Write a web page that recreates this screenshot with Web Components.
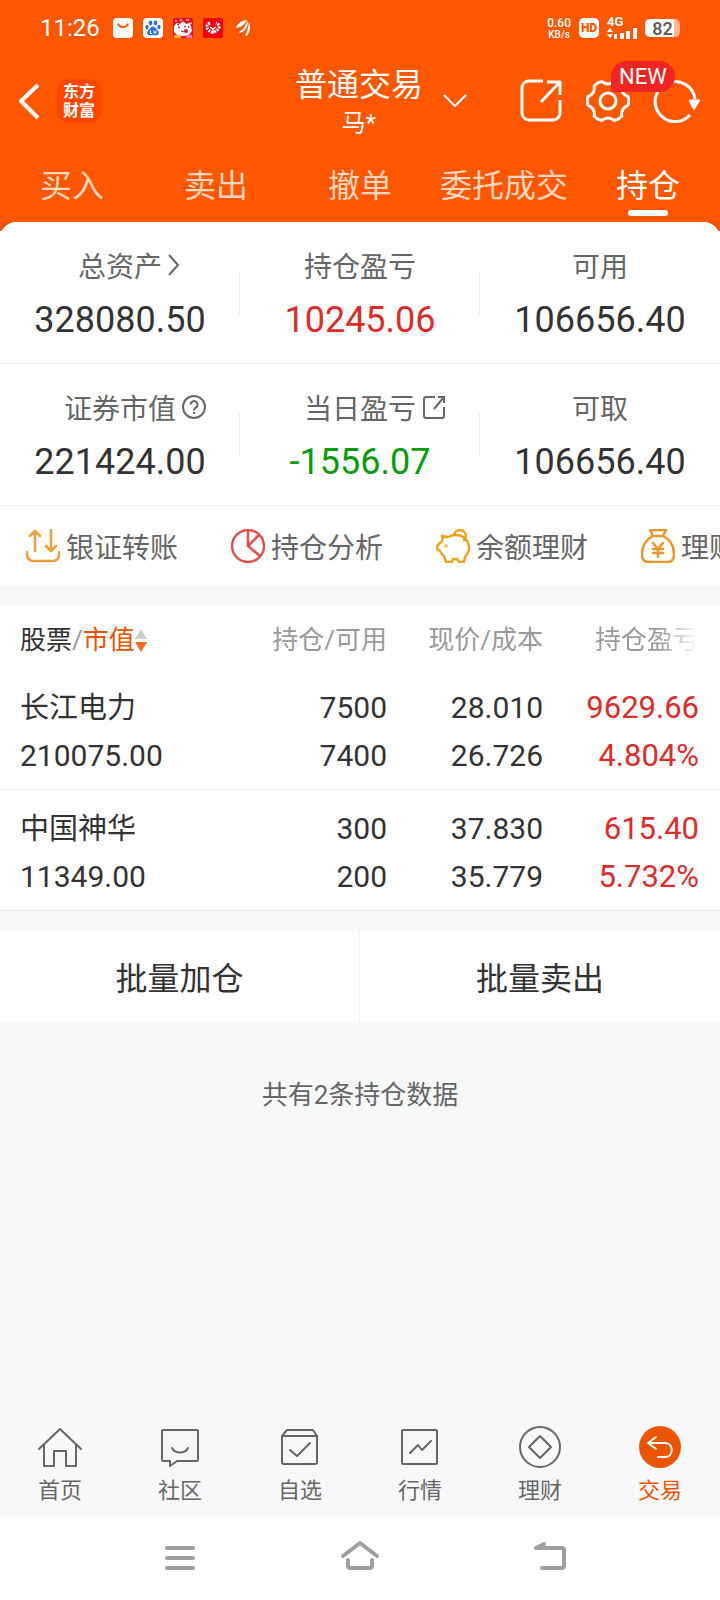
<!DOCTYPE html>
<html lang="zh-CN">
<head>
<meta charset="UTF-8">
<meta name="viewport" content="width=device-width, initial-scale=1.0">
<title>普通交易</title>
<style>
    html {
        --primary: #ff5700;
        --primary-dark: #ea5504;
        --text: #333333;
        --text-secondary: #666666;
        --text-light: #999999;
        --up: #dd2c2c;
        --down: #0a9a0a;
        --line: #ececec;
        --page: #f7f8fa;
        --cjk: Roboto, "Noto Sans CJK SC", sans-serif;
    }

    body {
        margin: 0;
        min-height: 100vh;
        display: flex;
        flex-direction: column;
        background: var(--page);
        color: var(--text);
        font-family: var(--cjk);
        overflow-x: hidden;
    }

    bottom-nav {
        margin-top: auto;
    }
</style>
</head>
<body>
<status-bar></status-bar>
<trade-header account="普通交易" user="马*"></trade-header>
<trade-tabs tabs="买入,卖出,撤单,委托成交,持仓" active="持仓"></trade-tabs>

<asset-board>
    <asset-item value="328080.50">总资产
        <svg slot="icon" width="12" height="22" viewBox="0 0 12 22" fill="none" stroke="#666" stroke-width="2"><path d="M1 1l9 10-9 10"/></svg>
    </asset-item>
    <asset-item value="10245.06" trend="up">持仓盈亏</asset-item>
    <asset-item value="106656.40">可用</asset-item>
    <asset-item value="221424.00">证券市值
        <svg slot="icon" width="24" height="24" viewBox="0 0 24 24" fill="none" stroke="#666" stroke-width="2"><circle cx="12" cy="12" r="11"/><path d="M8.500 9.500a3.500 3.500 0 1 1 5.500 2.900c-1.400.9-2 1.500-2 3M12 17v2"/></svg>
    </asset-item>
    <asset-item value="-1556.07" trend="down">当日盈亏
        <svg slot="icon" width="24" height="24" viewBox="0 0 24 24" fill="none" stroke="#666" stroke-width="2"><path d="M13 2H4a2 2 0 0 0-2 2v17a2 2 0 0 0 2 2h16a2 2 0 0 0 2-2v-9M16 2h6v6M22 2L12 14"/></svg>
    </asset-item>
    <asset-item value="106656.40">可取</asset-item>
</asset-board>

<quick-actions></quick-actions>
<position-table></position-table>
<batch-actions>共有2条持仓数据</batch-actions>
<bottom-nav></bottom-nav>
<system-nav></system-nav>

<script>
// 所有组件共用的基类：把模板克隆进 shadow root
class BaseElement extends HTMLElement {
    constructor() {
        super();
        this.attachShadow({mode: 'open'});
    }

    connectedCallback() {
        const template = document.createElement('template');
        template.innerHTML = this.render();
        this.shadowRoot.replaceChildren(template.content.cloneNode(true));
        this.setupEventListeners();
    }

    setupEventListeners() {
    }
}

// 手机状态栏
class StatusBar extends BaseElement {
    render() {
        return `
            <style>
                :host {
                    display: flex;
                    align-items: center;
                    justify-content: space-between;
                    height: 56px;
                    padding: 0 40px;
                    background: var(--primary);
                    color: #fff;
                }
                .group { display: flex; align-items: center; gap: 10px; }
                .right { gap: 8px; }
                .time { font-size: 24px; line-height: 32px; margin-right: 3px; }
                .speed { display: flex; flex-direction: column; align-items: center; font-size: 12px; line-height: 12px; font-weight: 500; }
                .speed small { font-size: 10px; line-height: 11px; }
                .hd {
                    width: 20px; height: 20px; border-radius: 5px; background: #fff;
                    color: var(--primary); font-size: 12px; line-height: 20px; font-weight: 900; text-align: center;
                }
                .signal { display: flex; flex-direction: column; font-size: 13px; line-height: 10px; font-weight: 700; }
                .battery {
                    width: 35px; height: 18px; border-radius: 5px;
                    background: linear-gradient(90deg, #fff 82%, #ffb58f 82%);
                    color: #555; font-size: 18px; line-height: 19px; font-weight: 500; text-align: center;
                }
                svg { display: block; }
            </style>
            <div class="group">
                <span class="time">11:26</span>
                <svg width="20" height="20" viewBox="0 0 20 20"><rect width="20" height="20" rx="4" fill="#fff"/><path d="M5 5.500c1 4.500 9 4.500 10 0" fill="none" stroke="#ff5700" stroke-width="2"/></svg>
                <svg width="20" height="20" viewBox="0 0 20 20"><rect width="20" height="20" rx="4" fill="#fff"/><g fill="#2d72d9"><ellipse cx="7.500" cy="5" rx="1.800" ry="2.400"/><ellipse cx="12.500" cy="5" rx="1.800" ry="2.400"/><ellipse cx="4" cy="9" rx="1.700" ry="2.200"/><ellipse cx="16" cy="9" rx="1.700" ry="2.200"/><path d="M10 8.500c2 0 3 2 4.500 3.500 2.500 2.500 1 5.500-1.500 5.500-1 0-2-.5-3-.5s-2 .5-3 .5c-2.500 0-4-3-1.500-5.500C7 10.500 8 8.500 10 8.500z"/></g><path d="M7.500 12.500v3h1.500M11 12.500v2.500h2v-2.500" fill="none" stroke="#fff"/></svg>
                <svg width="20" height="20" viewBox="0 0 20 20"><rect width="20" height="20" rx="2" fill="#e3122d"/><path d="M1 8l3-3 3 1 3-3 3 3 4-1 1 4 1 4-3 4-5 1-6 0-4-4z" fill="#fff"/><path d="M2 3h2M7 2h2M13 2h3M17 5h2" stroke="#fff"/><path d="M5 9l2 1M11 9l2-1M8 13q3 2 5-1M4 6l2 1M15 8l1 2" stroke="#551a20" fill="none"/><circle cx="13" cy="13" r="2" fill="#e3122d"/><rect x="1" y="17" width="7" height="3" fill="#ffb52e"/><rect x="13" y="17" width="6" height="3" fill="#f06fae"/></svg>
                <svg width="20" height="20" viewBox="0 0 20 20"><rect width="20" height="20" rx="2" fill="#f0000f"/><path d="M7 5C2 7 3 12 10 14.500 17 12 18 7 13 5" fill="none" stroke="#fff" stroke-width="3" stroke-dasharray="2 1"/><path d="M7 9l3 2 3-2M10 10v5" fill="none" stroke="#fff" stroke-width="1.500"/></svg>
                <svg width="20" height="20" viewBox="0 0 20 20" fill="#fff"><path d="M3 9C6 4 10 2.500 14 2 12 6 9 9 4 10zM6 14c5-3 6-7 9-11 0 6-3 11-8 12zM12 17c3-4 3-8 4-13 2 5 1 10-2 14z"/></svg>
            </div>
            <div class="group right">
                <span class="speed">0.60<small>KB/s</small></span>
                <span class="hd">HD</span>
                <span class="signal">4G
                    <svg width="30" height="12" viewBox="0 0 30 12" fill="#fff"><path d="M0 5l3-4 3 4zM0 7h6l-3 4zM7 7h3v5H7zM13 6h4v6h-4zM19 4h4v8h-4zM26 1h4v11h-4z"/></svg>
                </span>
                <span class="battery">82</span>
            </div>
        `;
    }
}

// 顶部标题栏
class TradeHeader extends BaseElement {
    render() {
        return `
            <style>
                :host {
                    display: grid;
                    grid-template-columns: 1fr auto 1fr;
                    align-items: center;
                    height: 86px;
                    padding: 2px 19px 0 17px;
                    background: var(--primary);
                    color: #fff;
                }
                button { padding: 0; border: 0; background: none; color: inherit; font: inherit; cursor: pointer; }
                svg { display: block; fill: none; stroke: #fff; stroke-width: 3; stroke-linejoin: round; }
                .left { display: flex; align-items: center; gap: 16px; }
                .back svg { stroke-width: 4; }
                .logo {
                    width: 44px; height: 44px; border-radius: 12px; background: #ff4600;
                    display: flex; flex-direction: column; justify-content: center;
                    font-size: 16px; line-height: 19px; font-weight: 700; text-align: center;
                }
                .title { display: flex; flex-direction: column; padding-top: 4px; font-size: 32px; line-height: 40px; text-align: center; }
                .title small { font-size: 24px; line-height: 36px; }
                .right { display: flex; align-items: center; justify-content: space-between; padding-left: 20px; }
                .tools { display: flex; align-items: center; gap: 23px; }
                .gear { position: relative; }
                .badge {
                    position: absolute; left: 25px; top: -18px;
                    padding: 0 8px; border-radius: 16px 16px 16px 2px;
                    background: #f12424; font-size: 22px; line-height: 31px;
                }
            </style>
            <div class="left">
                <button class="back" aria-label="返回"><svg width="24" height="40" viewBox="0 0 24 40"><path d="M21 4L4 20l17 17"/></svg></button>
                <span class="logo"><span>东方</span><span>财富</span></span>
            </div>
            <div class="title">${this.getAttribute('account')}<small>${this.getAttribute('user')}</small></div>
            <div class="right">
                <button aria-label="切换账户"><svg width="24" height="14" viewBox="0 0 24 14" style="stroke-width:2"><path d="M1 1l11 11L23 1"/></svg></button>
                <div class="tools">
                    <button aria-label="分享"><svg width="44" height="44" viewBox="0 0 44 44"><path d="M24 2H10a7 7 0 0 0-7 7v25a7 7 0 0 0 7 7h24a7 7 0 0 0 7-7V21M28 3h13v13M40 4L22 23"/></svg></button>
                    <button class="gear" aria-label="设置"><svg width="44" height="44" viewBox="0 0 44 44"><circle cx="22" cy="22" r="8"/><path d="M42 17.700Q43.500 22 42 26.300 34.600 29.300 35.700 37.200 32.800 40.600 28.300 41.500 22 36.500 15.700 41.500 11.200 40.600 8.300 37.200 9.400 29.300 2 26.300.5 22 2 17.700 9.400 14.700 8.300 6.800 11.200 3.400 15.700 2.500 22 7.500 28.300 2.500 32.800 3.400 35.700 6.800 34.600 14.700 42 17.700z"/></svg><span class="badge">NEW</span></button>
                    <button aria-label="刷新"><svg width="48" height="44" viewBox="0 0 48 44"><path d="M37 36A20 20 0 1 1 42 20"/><path d="M36 21h11l-6 10z" fill="#fff" stroke-width="1"/></svg></button>
                </div>
            </div>
        `;
    }
}

// 交易标签页
class TradeTabs extends BaseElement {
    render() {
        const tabs = this.getAttribute('tabs').split(',');
        const active = this.getAttribute('active');
        return `
            <style>
                :host { display: block; background: var(--primary); }
                nav { display: grid; grid-template-columns: repeat(5, 1fr); padding-top: 18px; }
                button {
                    display: flex; flex-direction: column; align-items: center;
                    padding: 0 0 6px; border: 0; background: none; cursor: pointer;
                    color: #ffd5bf; font: inherit; font-size: 32px; line-height: 48px; white-space: nowrap;
                }
                button::after { content: ''; width: 40px; height: 6px; border-radius: 3px; }
                .active { color: #fff; }
                .active::after { background: #fff; }
            </style>
            <nav>${tabs.map(t => `<button class="${t === active ? 'active' : ''}">${t}</button>`).join('')}</nav>
        `;
    }

    setupEventListeners() {
        const buttons = this.shadowRoot.querySelectorAll('button');
        buttons.forEach(button => {
            button.addEventListener('click', () => {
                buttons.forEach(b => b.classList.remove('active'));
                button.classList.add('active');
            });
        });
    }
}

// 资产总览
class AssetBoard extends BaseElement {
    render() {
        return `
            <style>
                :host { display: block; background: linear-gradient(#e95408 9px, #fff 9px); }
                .grid {
                    display: grid; grid-template-columns: repeat(3, 1fr);
                    background: #fff; border-radius: 16px 16px 0 0; overflow: hidden;
                }
            </style>
            <div class="grid"><slot></slot></div>
        `;
    }
}

class AssetItem extends BaseElement {
    render() {
        return `
            <style>
                :host {
                    display: block;
                    padding: 26px 0 19px;
                    border-bottom: 1px solid var(--line);
                    background: linear-gradient(var(--line), var(--line)) right center / 1px 44px no-repeat;
                }
                :host(:nth-child(3n)) { background: none; }
                .label {
                    display: grid; grid-template-columns: 1fr auto 1fr; align-items: center; column-gap: 6px;
                    margin-bottom: 8px; color: var(--text-secondary); font-size: 28px; line-height: 40px;
                }
                .label span { grid-column: 2; }
                ::slotted(svg) { margin-bottom: 6px; }
                .value { font-size: 36px; line-height: 48px; text-align: center; }
                .up { color: var(--up); }
                .down { color: var(--down); }
            </style>
            <div class="label"><span><slot></slot></span><slot name="icon"></slot></div>
            <div class="value ${this.getAttribute('trend') || ''}">${this.getAttribute('value')}</div>
        `;
    }
}

// 快捷入口，超出屏幕的部分横向滚动
class QuickActions extends BaseElement {
    render() {
        return `
            <style>
                :host {
                    display: flex; gap: 53px; height: 79px; padding-left: 26px;
                    background: #fff; overflow: hidden;
                }
                a {
                    display: flex; align-items: center; gap: 6px; flex: none; padding-top: 6px;
                    color: var(--text-secondary); text-decoration: none; font-size: 28px; line-height: 40px;
                }
                svg { margin-bottom: 6px; fill: none; stroke-width: 2.500; stroke-linecap: round; stroke-linejoin: round; }
            </style>
            <a href="#"><svg width="34" height="34" viewBox="0 0 34 34" stroke="#e8a03c"><path d="M1 23v3a6 6 0 0 0 6 6h20a6 6 0 0 0 6-6v-3M9 22V2M4 7l5-5 5 5M25 1v21M20 17l5 5 5-5"/></svg>银证转账</a>
            <a href="#"><svg width="34" height="34" viewBox="0 0 34 34" stroke="#e34d4d"><circle cx="17" cy="17" r="16"/><path d="M17 1v16l11-11M17 17l12 10"/></svg>持仓分析</a>
            <a href="#"><svg width="34" height="34" viewBox="0 0 34 34" stroke="#eca41a"><path d="M6 7l6 1c2-1 5-2 8-2 8 0 13 6 13 13 0 4-2 7-4 9l-1 5h-5l-2-3h-4l-1 3H10l-2-6c-2-1-3-3-4-5l-3-2v-3l5-5c1-1 1-2 0-5zM18 6c1-7 12-6 12 1 0 2-1 3-2 4"/><circle cx="10" cy="17" r=".5"/></svg>余额理财</a>
            <a href="#"><svg width="34" height="34" viewBox="0 0 34 34" stroke="#e9962c"><path d="M9 1h16l-3 6H12zM12 7C4 11 1 17 1 25c0 6 2 8 6 8h20c4 0 6-2 6-8 0-8-3-14-11-18M12 14l5 6 5-6M17 20v8M12 20h10M12 24h10"/></svg>理财</a>
        `;
    }
}

// 持仓列表
class PositionTable extends BaseElement {
    get rows() {
        return [
            {name: '长江电力', worth: '210075.00', held: '7500', usable: '7400', price: '28.010', cost: '26.726', profit: '9629.66', rate: '4.804%'},
            {name: '中国神华', worth: '11349.00', held: '300', usable: '200', price: '37.830', cost: '35.779', profit: '615.40', rate: '5.732%'}
        ];
    }

    render() {
        return `
            <style>
                :host { display: block; margin: 20px 0; background: #fff; }
                table { width: 100%; border-collapse: collapse; table-layout: fixed; }
                th, td { box-sizing: border-box; padding: 0 0 0 20px; text-align: right; white-space: nowrap; }
                th:first-child, td:first-child { text-align: left; }
                th:last-child, td:last-child { padding-left: 0; padding-right: 21px; }
                .num { width: 156px; }
                .last { width: 177px; }
                th { height: 64px; padding-top: 6px; color: var(--text-light); font-size: 26px; line-height: 40px; font-weight: 400; }
                th b { color: var(--text); font-weight: 400; }
                th button { padding: 0; border: 0; background: none; font: inherit; color: var(--primary-dark); cursor: pointer; }
                th svg { vertical-align: -4px; }
                .fade { -webkit-mask-image: linear-gradient(90deg, #000 60%, transparent); mask-image: linear-gradient(90deg, #000 60%, transparent); }
                tbody tr { border-bottom: 1px solid var(--line); }
                td { padding-top: 15px; padding-bottom: 9px; font-size: 30px; line-height: 48px; }
                td:last-child { color: var(--up); font-size: 31px; }
                td div { height: 48px; }
                .name { font-size: 29px; }
            </style>
            <table>
                <thead>
                    <tr>
                        <th class="first"><b>股票</b>/<button>市值<svg width="12" height="24" viewBox="0 0 12 24"><path d="M6 0l6 10H0z" fill="#ccc"/><path d="M0 13h12L6 23z" fill="#f26a1b"/></svg></button></th>
                        <th class="num">持仓/可用</th>
                        <th class="num">现价/成本</th>
                        <th class="last"><span class="fade">持仓盈亏</span></th>
                    </tr>
                </thead>
                <tbody>
                    ${this.rows.map(r => `
                        <tr>
                            <td><div class="name">${r.name}</div><div>${r.worth}</div></td>
                            <td><div>${r.held}</div><div>${r.usable}</div></td>
                            <td><div>${r.price}</div><div>${r.cost}</div></td>
                            <td><div>${r.profit}</div><div>${r.rate}</div></td>
                        </tr>`).join('')}
                </tbody>
            </table>
        `;
    }
}

// 批量操作按钮和列表底部提示
class BatchActions extends BaseElement {
    render() {
        return `
            <style>
                :host { display: block; }
                .buttons { display: grid; grid-template-columns: 1fr 1fr; background: #fff; }
                button {
                    height: 92px; padding: 4px 0 0; border: 0; background: none; cursor: pointer;
                    color: var(--text); font: inherit; font-size: 32px; line-height: 48px;
                }
                button:first-child { border-right: 1px solid #f3f3f3; }
                p { margin: 52px 0 48px; color: var(--text-secondary); font-size: 26px; line-height: 40px; text-align: center; }
            </style>
            <div class="buttons"><button>批量加仓</button><button>批量卖出</button></div>
            <p><slot></slot></p>
        `;
    }
}

// 应用底部导航
class BottomNav extends BaseElement {
    render() {
        return `
            <style>
                :host { display: block; background: #f8f8fa; }
                nav { display: grid; grid-template-columns: repeat(6, 1fr); padding: 9px 0 11px; }
                a {
                    display: flex; flex-direction: column; align-items: center; gap: 8px;
                    color: var(--text-secondary); text-decoration: none; font-size: 22px; line-height: 28px;
                }
                .active { color: var(--primary-dark); }
                svg { fill: none; stroke: #666; stroke-width: 2; stroke-linejoin: round; stroke-linecap: round; }
                .active svg { stroke: #fff; }
            </style>
            <nav>
                <a href="#"><svg width="44" height="44" viewBox="0 0 44 44"><path d="M1 24L22 4l21 20M6 20v21h10V26h12v15h10V20"/></svg>首页</a>
                <a href="#"><svg width="44" height="44" viewBox="0 0 44 44"><path d="M5 5h34a1 1 0 0 1 1 1v29a1 1 0 0 1-1 1H19l-7 5v-5H5a1 1 0 0 1-1-1V6a1 1 0 0 1 1-1zM14 23c3 6 13 6 16 0"/></svg>社区</a>
                <a href="#"><svg width="44" height="44" viewBox="0 0 44 44"><path d="M4 11l5-6h26l4 6v26a2 2 0 0 1-2 2H6a2 2 0 0 1-2-2zM4 11h35M12 25l7 6 13-13"/></svg>自选</a>
                <a href="#"><svg width="44" height="44" viewBox="0 0 44 44"><rect x="4" y="5" width="35" height="34" rx="1"/><path d="M12 28l8-8 4 5 9-9"/></svg>行情</a>
                <a href="#"><svg width="44" height="44" viewBox="0 0 44 44"><circle cx="22" cy="22" r="20"/><path d="M22 11l11 11-11 11-11-11z"/></svg>理财</a>
                <a href="#" class="active"><svg width="44" height="44" viewBox="0 0 44 44"><circle cx="22" cy="22" r="21" fill="#ea5504" stroke="none"/><path d="M18 12l-8 6 8 6M11 18h16c9 0 9 14 0 14h-7"/></svg>交易</a>
            </nav>
        `;
    }
}

// 系统三键导航
class SystemNav extends BaseElement {
    render() {
        return `
            <style>
                :host { display: grid; grid-template-columns: repeat(3, 1fr); height: 84px; padding: 0 12.5%; background: #fff; }
                button { display: flex; align-items: center; justify-content: center; padding: 0; border: 0; background: none; cursor: pointer; }
                svg { fill: none; stroke: #9e9e9e; stroke-width: 4; stroke-linecap: round; stroke-linejoin: round; }
            </style>
            <button aria-label="任务"><svg width="56" height="40" viewBox="0 0 56 40"><path d="M15 10h26M15 20h26M15 30h26"/></svg></button>
            <button aria-label="主页"><svg width="56" height="40" viewBox="0 0 56 40"><path d="M11 18L28 5l17 13M16 22v6a2 2 0 0 0 2 2h20a2 2 0 0 0 2-2v-6"/></svg></button>
            <button aria-label="返回"><svg width="56" height="40" viewBox="0 0 56 40"><path d="M32 6l-8 4h26a2 2 0 0 1 2 2v16a2 2 0 0 1-2 2H30"/></svg></button>
        `;
    }
}

// 注册自定义元素
customElements.define('status-bar', StatusBar);
customElements.define('trade-header', TradeHeader);
customElements.define('trade-tabs', TradeTabs);
customElements.define('asset-board', AssetBoard);
customElements.define('asset-item', AssetItem);
customElements.define('quick-actions', QuickActions);
customElements.define('position-table', PositionTable);
customElements.define('batch-actions', BatchActions);
customElements.define('bottom-nav', BottomNav);
customElements.define('system-nav', SystemNav);
</script>
</body>
</html>
